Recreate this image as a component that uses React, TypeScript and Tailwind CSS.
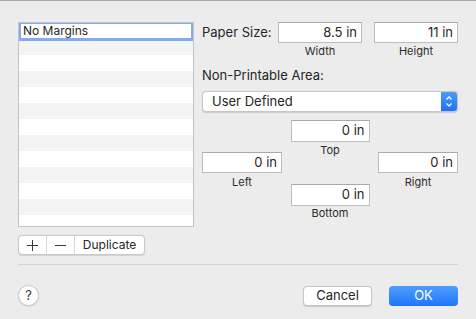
import React from 'react';

const font = "font-['Inter','Liberation_Sans',sans-serif]";

const Field = ({ value, className }: { value: string; className?: string }) => (
  <div
    className={`flex items-center justify-end bg-white border border-[#bdbdbd] border-t-[#a9a9a9] pr-[4px] text-[13px] text-[#262626] ${className ?? ''}`}
  >
    {value}
  </div>
);

const Caption = ({ children, className }: { children: React.ReactNode; className?: string }) => (
  <div className={`text-center text-[11px] leading-[14px] text-[#2b2b2b] ${className ?? ''}`}>{children}</div>
);

const rows = Array.from({ length: 12 });

export default function App() {
  return (
    <div className={`w-[476px] h-[319px] bg-[#ececec] border-t border-[#a8a8a8] ${font} text-[#262626]`}>
      <div className="px-[18px] pt-[21px]">
        <div className="flex gap-[8px]">
          {/* list of presets */}
          <div className="w-[176px] flex flex-col">
            <div className="h-[205px] border border-[#c3c3c3] bg-white overflow-hidden flex flex-col">
              <div className="h-[16px] shrink-0 relative">
                <div className="absolute left-0 right-0 -top-[1px] h-[19px] border-2 border-b-[3px] border-[#86aaf2] bg-white flex items-center pl-[2px] text-[12px] text-[#262626]">
                  No Margins
                </div>
              </div>
              {rows.map((_, i) => (
                <div key={i} className={`h-[16px] shrink-0 ${i % 2 === 0 ? 'bg-[#f3f4f4]' : 'bg-white'}`} />
              ))}
            </div>
            <div className="mt-[8px] flex w-[127px] h-[20px] bg-white border border-[#c9c9c9] rounded-[4px] shadow-[0_0.5px_1px_rgba(0,0,0,0.12)] overflow-hidden">
              <div className="w-[28px] flex items-center justify-center border-r border-[#d8d8d8]">
                <svg width="11" height="11" viewBox="0 0 11 11">
                  <path d="M5.5 0v11M0 5.5h11" stroke="#3a3a3a" strokeWidth="1" />
                </svg>
              </div>
              <div className="w-[28px] flex items-center justify-center border-r border-[#d8d8d8]">
                <svg width="11" height="11" viewBox="0 0 11 11">
                  <path d="M0 5.5h11" stroke="#3a3a3a" strokeWidth="1" />
                </svg>
              </div>
              <div className="flex-1 flex items-center justify-center text-[12px] text-[#262626]">Duplicate</div>
            </div>
          </div>

          {/* settings */}
          <div className="flex-1 flex flex-col">
            <div className="flex items-center h-[21px]">
              <div className="w-[76px] text-[13px]">Paper Size:</div>
              <Field value="8.5 in" className="w-[84px] h-[21px]" />
              <Field value="11 in" className="w-[84px] h-[21px] ml-[12px]" />
            </div>
            <div className="flex mt-[1px]">
              <Caption className="w-[84px] ml-[76px]">Width</Caption>
              <Caption className="w-[84px] ml-[12px]">Height</Caption>
            </div>
            <div className="mt-[9px] text-[13px] leading-[16px]">Non-Printable Area:</div>
            <div className="mt-[8px] h-[21px] flex bg-white border border-[#c6c6c6] rounded-[4px] shadow-[0_0.5px_1px_rgba(0,0,0,0.15)] overflow-hidden">
              <div className="flex-1 flex items-center pl-[9px] text-[13px]">User Defined</div>
              <div className="w-[16px] bg-gradient-to-b from-[#4a9bfc] to-[#1b72f6] flex items-center justify-center">
                <svg width="8" height="13" viewBox="0 0 8 13">
                  <path d="M1.5 4.5L4 2l2.5 2.5M1.5 8.5L4 11l2.5-2.5" fill="none" stroke="#fff" strokeWidth="1.3" />
                </svg>
              </div>
            </div>

            <div className="mt-[8px] grid grid-cols-[80px_1fr_80px] grid-rows-[22px_42px_22px_auto]">
              <div className="col-start-2 row-start-1 flex justify-center">
                <Field value="0 in" className="w-[79px] h-[22px]" />
              </div>
              <div className="col-start-2 row-start-2">
                <Caption className="pt-[1px]">Top</Caption>
              </div>
              <div className="col-start-1 row-start-2 row-span-2 pt-[10px]">
                <Field value="0 in" className="w-[80px] h-[21px]" />
                <Caption className="mt-[2px]">Left</Caption>
              </div>
              <div className="col-start-3 row-start-2 row-span-2 pt-[10px]">
                <Field value="0 in" className="w-[80px] h-[21px]" />
                <Caption className="mt-[2px]">Right</Caption>
              </div>
              <div className="col-start-2 row-start-3 flex justify-center">
                <Field value="0 in" className="w-[79px] h-[22px]" />
              </div>
              <div className="col-start-2 row-start-4">
                <Caption>Bottom</Caption>
              </div>
            </div>
          </div>
        </div>

        <div className="mt-[9px] h-px bg-[#d3d3d3]" />

        <div className="mt-[20px] flex items-center">
          <div className="w-[21px] h-[21px] rounded-full bg-white border border-[#c8c8c8] shadow-[0_0.5px_1px_rgba(0,0,0,0.15)] flex items-center justify-center text-[13px] text-[#333]">
            ?
          </div>
          <div className="ml-auto w-[69px] h-[20px] bg-white border border-[#c6c6c6] rounded-[4px] shadow-[0_0.5px_1px_rgba(0,0,0,0.15)] flex items-center justify-center text-[13px]">
            Cancel
          </div>
          <div className="ml-[17px] w-[69px] h-[20px] rounded-[4px] bg-gradient-to-b from-[#4f9dfd] to-[#1e74f7] flex items-center justify-center text-[13px] text-white">
            OK
          </div>
        </div>
      </div>
    </div>
  );
}
